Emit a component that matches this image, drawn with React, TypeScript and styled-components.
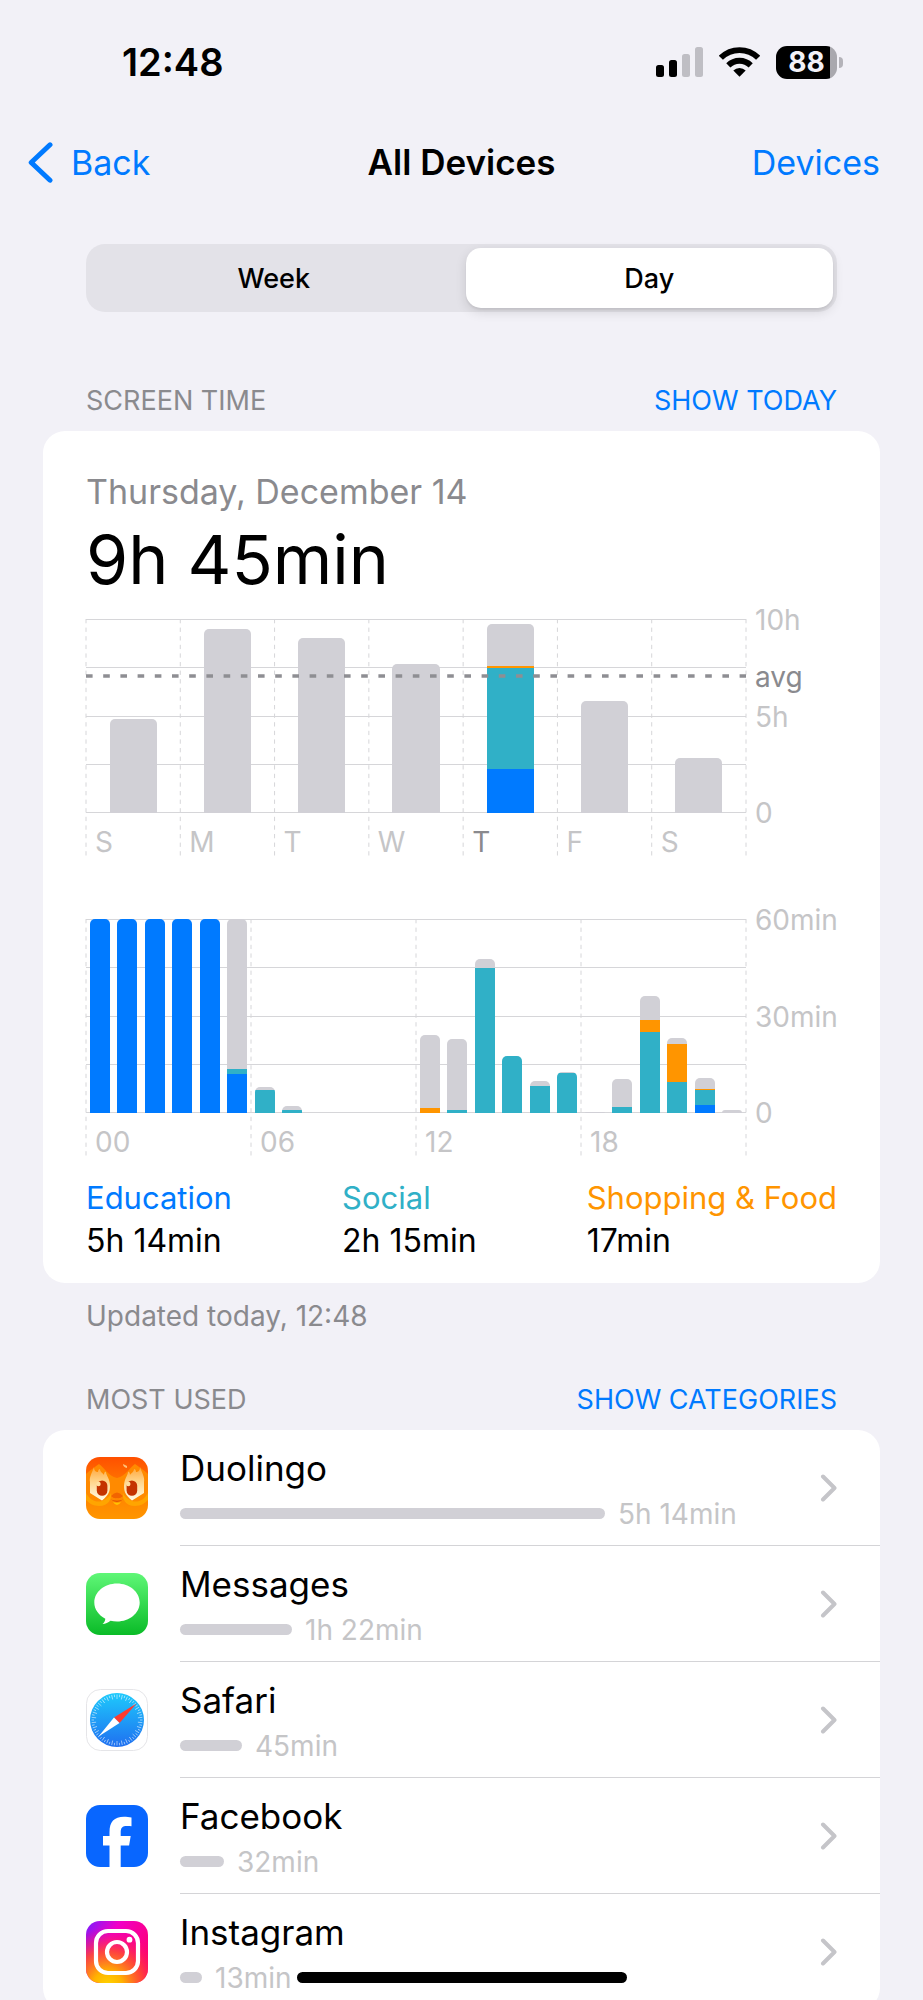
import React from "react";
import styled, { createGlobalStyle } from "styled-components";

const color = {
  page: "#f2f1f7",
  card: "#ffffff",
  blue: "#007aff",
  teal: "#30b0c7",
  orange: "#ff9500",
  gray: "#d1d0d6",
  label: "#8a8a8e",
  faint: "#c5c5c7",
  line: "#d6d6d9",
};

const GlobalStyle = createGlobalStyle`
  *, *::before, *::after { box-sizing: border-box; }
  body {
    margin: 0;
    background: ${color.page};
    color: #000;
    font-family: Inter, "Liberation Sans", sans-serif;
    font-size: 34px;
  }
  h1, h2, p, ul, dl, dt, dd { margin: 0; padding: 0; font: inherit; }
  button { border: 0; padding: 0; background: none; color: inherit; font: inherit; cursor: pointer; }
  a { color: inherit; text-decoration: none; }
  svg { display: block; }
`;

const Screen = styled.div`
  height: 100vh;
  overflow-y: auto;
  scrollbar-width: none;
`;

/* ---------- status bar and navigation ---------- */

const StatusBar = styled.header`
  display: flex;
  align-items: center;
  justify-content: space-between;
  height: 124px;
  padding: 0 80px 0 122px;
`;

const Clock = styled.time`
  font-size: 38px;
  font-weight: 600;
`;

const StatusIcons = styled.div`
  display: flex;
  align-items: center;
  gap: 16px;
`;

const Battery = styled.div`
  display: flex;
  align-items: center;
  gap: 2px;
`;

const BatteryBody = styled.div`
  display: flex;
  justify-content: center;
  align-items: center;
  width: 61px;
  height: 33px;
  border-radius: 11px;
  background: linear-gradient(to right, #000 54px, #a9a8ae 54px);
  color: ${color.page};
  font-size: 28px;
  font-weight: 700;
`;

const BatteryTip = styled.div`
  width: 4px;
  height: 11px;
  border-radius: 0 4px 4px 0;
  background: #b4b3b9;
`;

const NavBar = styled.nav`
  display: grid;
  grid-template-columns: 1fr auto 1fr;
  align-items: center;
  height: 76px;
  padding: 0 28px;
`;

const NavTitle = styled.h1`
  font-size: 35px;
  font-weight: 600;
`;

const NavButton = styled.button<{ $end?: boolean }>`
  display: flex;
  align-items: center;
  gap: 18px;
  justify-self: ${(p) => (p.$end ? "end" : "start")};
  padding-right: ${(p) => (p.$end ? 15 : 0)}px;
  color: ${color.blue};
`;

const Main = styled.main`
  padding: 44px 43px 0;
`;

const Segmented = styled.div`
  display: grid;
  grid-template-columns: 1fr 1fr;
  gap: 8px;
  height: 68px;
  margin: 0 43px;
  padding: 4px;
  border-radius: 19px;
  background: #e3e2e8;
`;

const Segment = styled.button<{ $active?: boolean }>`
  border-radius: 15px;
  font-size: 27px;
  font-weight: 500;
  background: ${(p) => (p.$active ? "#fff" : "transparent")};
  box-shadow: ${(p) => (p.$active ? "0 4px 12px rgba(0,0,0,.12), 0 2px 2px rgba(0,0,0,.06)" : "none")};
`;

/* ---------- sections ---------- */

const SectionHead = styled.div<{ $top: number }>`
  display: flex;
  justify-content: space-between;
  align-items: center;
  margin-top: ${(p) => p.$top}px;
  padding: 0 43px 13px;
  font-size: 27px;
  line-height: 34px;
`;

const SectionTitle = styled.h2`
  color: ${color.label};
`;

const SectionLink = styled.button`
  color: ${color.blue};
`;

const Card = styled.section`
  border-radius: 22px;
  background: ${color.card};
  overflow: hidden;
`;

const Summary = styled(Card)`
  padding: 40px 43px 21px;
`;

const DateText = styled.p`
  color: ${color.label};
  line-height: 42px;
`;

const Total = styled.p`
  font-size: 68px;
  line-height: 92px;
`;

const Note = styled.p`
  padding: 14px 43px 0;
  color: ${color.label};
  font-size: 28px;
  line-height: 38px;
`;

/* ---------- charts ---------- */

const PLOT = 193;
const FULL = 237;

const Chart = styled.figure<{ $top: number }>`
  display: grid;
  grid-template-columns: 1fr 91px;
  margin: ${(p) => p.$top}px 0 0;
`;

const Plot = styled.div`
  display: grid;
  height: ${FULL}px;

  > * {
    grid-area: 1 / 1;
  }
`;

const Bars = styled.div<{ $count: number }>`
  display: grid;
  grid-template-columns: repeat(${(p) => p.$count}, 1fr);
  align-items: end;
  justify-items: center;
  height: ${PLOT + 1}px;
`;

const Bar = styled.div<{ $wide?: boolean }>`
  display: flex;
  flex-direction: column-reverse;
  width: ${(p) => (p.$wide ? 50 : 73)}%;
  border-radius: 5px 5px 0 0;
  overflow: hidden;
`;

const Part = styled.div<{ $color: string }>`
  background: ${(p) => p.$color};
`;

const TickRow = styled.div<{ $count: number }>`
  display: grid;
  grid-template-columns: repeat(${(p) => p.$count}, 1fr);
  align-self: end;
  color: ${color.faint};
  font-size: 28px;
  line-height: 27px;
`;

const Tick = styled.span<{ $active?: boolean }>`
  padding-left: 9px;
  color: ${(p) => (p.$active ? color.label : "inherit")};
`;

const Scale = styled.div`
  display: flex;
  flex-direction: column;
  margin-top: -13px;
  padding-left: 9px;
  color: ${color.faint};
  font-size: 28px;
  line-height: 28px;
`;

const ScaleLabel = styled.span<{ $gap: number; $strong?: boolean }>`
  height: 28px;
  margin-top: ${(p) => p.$gap}px;
  color: ${(p) => (p.$strong ? color.label : "inherit")};
`;

function GridLines({ columns }: { columns: number }) {
  return (
    <svg width="100%" height={FULL} overflow="visible" aria-hidden="true">
      {[0, 48, 97, 145, 193].map((y) => (
        <line key={y} x1="0" x2="100%" y1={y + 0.5} y2={y + 0.5} stroke={color.line} />
      ))}
      {Array.from({ length: columns + 1 }, (_, i) => (
        <line
          key={i}
          x1={`${(i * 100) / columns}%`}
          x2={`${(i * 100) / columns}%`}
          y1="0"
          y2={FULL}
          stroke={color.line}
          strokeDasharray="4.3 4.3"
        />
      ))}
    </svg>
  );
}

type Stack = { edu?: number; social?: number; shop?: number; other?: number };

function StackedBars({ data, wide }: { data: Stack[]; wide?: boolean }) {
  return (
    <Bars $count={data.length}>
      {data.map((d, i) => (
        <Bar key={i} $wide={wide}>
          <Part $color={color.blue} style={{ height: d.edu ?? 0 }} />
          <Part $color={color.teal} style={{ height: d.social ?? 0 }} />
          <Part $color={color.orange} style={{ height: d.shop ?? 0 }} />
          <Part $color={color.gray} style={{ height: d.other ?? 0 }} />
        </Bar>
      ))}
    </Bars>
  );
}

const week: Stack[] = [
  { other: 94 },
  { other: 184 },
  { other: 175 },
  { other: 149 },
  { edu: 44, social: 101, shop: 2, other: 42 },
  { other: 112 },
  { other: 55 },
];

const hours: Stack[] = [
  { edu: 194 },
  { edu: 194 },
  { edu: 194 },
  { edu: 194 },
  { edu: 194 },
  { edu: 39, social: 5, other: 150 },
  { social: 23, other: 3 },
  { social: 3, other: 4 },
  {},
  {},
  {},
  {},
  { shop: 5, other: 73 },
  { social: 3, other: 71 },
  { social: 145, other: 9 },
  { social: 57 },
  { social: 27, other: 5 },
  { social: 40, other: 1 },
  { other: 1 },
  { social: 6, other: 28 },
  { social: 81, shop: 12, other: 24 },
  { social: 31, shop: 38, other: 6 },
  { edu: 8, social: 15, shop: 1, other: 11 },
  { other: 3 },
];

const days = ["S", "M", "T", "W", "T", "F", "S"];

function WeekChart() {
  return (
    <Chart $top={14} aria-label="Screen time per day">
      <Plot>
        <GridLines columns={7} />
        <StackedBars data={week} wide />
        <svg width="100%" height={PLOT} aria-hidden="true">
          <line x1="0" x2="100%" y1="57" y2="57" stroke="#8e8e93" strokeWidth="3.4" strokeDasharray="6.6 10.6" />
        </svg>
        <TickRow $count={7}>
          {days.map((d, i) => (
            <Tick key={i} $active={i === 4}>
              {d}
            </Tick>
          ))}
        </TickRow>
      </Plot>
      <Scale>
        <ScaleLabel $gap={0}>10h</ScaleLabel>
        <ScaleLabel $gap={29} $strong>
          avg
        </ScaleLabel>
        <ScaleLabel $gap={12}>5h</ScaleLabel>
        <ScaleLabel $gap={68}>0</ScaleLabel>
      </Scale>
    </Chart>
  );
}

function HourChart() {
  return (
    <Chart $top={63} aria-label="Screen time per hour">
      <Plot>
        <GridLines columns={4} />
        <StackedBars data={hours} />
        <TickRow $count={4}>
          {["00", "06", "12", "18"].map((h) => (
            <Tick key={h}>{h}</Tick>
          ))}
        </TickRow>
      </Plot>
      <Scale>
        <ScaleLabel $gap={0}>60min</ScaleLabel>
        <ScaleLabel $gap={69}>30min</ScaleLabel>
        <ScaleLabel $gap={68}>0</ScaleLabel>
      </Scale>
    </Chart>
  );
}

const Legend = styled.dl`
  display: flex;
  justify-content: space-between;
  margin-top: 20px;
  font-size: 31px;
  line-height: 43px;
`;

const LegendName = styled.dt<{ $color: string }>`
  color: ${(p) => p.$color};
`;

const LegendTime = styled.dd`
  font-size: 32px;
`;

/* ---------- app list ---------- */

const AppList = styled.ul`
  list-style: none;
`;

const AppRow = styled.li`
  padding-left: 43px;
`;

const AppLink = styled.a`
  display: flex;
  align-items: center;
  gap: 32px;
`;

const AppBody = styled.div`
  display: flex;
  flex: 1;
  align-items: center;
  justify-content: space-between;
  height: 116px;
  padding-right: 43px;
  border-bottom: 1px solid #d4d4d7;
`;

const AppText = styled.div`
  flex: 1;
  padding-top: 4px;
`;

const AppName = styled.div`
  font-size: 35px;
  line-height: 48px;
`;

const Usage = styled.div`
  display: flex;
  align-items: center;
  gap: 13px;
  color: ${color.faint};
  font-size: 28px;
  line-height: 44px;
`;

const UsageBar = styled.div`
  height: 11px;
  border-radius: 6px;
  background: ${color.gray};
`;

const HomeIndicator = styled.div`
  position: fixed;
  bottom: 17px;
  left: 50%;
  width: 330px;
  height: 11px;
  border-radius: 6px;
  background: #000;
  transform: translateX(-50%);
`;

/* ---------- drawings ---------- */

const SignalIcon = () => (
  <svg width="47" height="30" viewBox="0 0 47 30" aria-hidden="true">
    <rect x="0" y="18" width="8" height="12" rx="2.5" />
    <rect x="13" y="13" width="8" height="17" rx="2.5" />
    <rect x="26" y="7" width="8" height="23" rx="2.5" fill="#bfbec4" />
    <rect x="39" y="0" width="8" height="30" rx="2.5" fill="#bfbec4" />
  </svg>
);

const WifiIcon = () => (
  <svg width="41" height="30" viewBox="0 0 41 30" fill="none" stroke="#000" strokeWidth="5.8" aria-hidden="true">
    <path d="M1.9 10.8a26.4 26.4 0 0 1 37.2 0" />
    <path d="M9.3 18.4a15.8 15.8 0 0 1 22.4 0" />
    <path d="M20.5 29.8l-6.2-6.300a8.700 8.700 0 0 1 12.400 0z" fill="#000" stroke="none" />
  </svg>
);

const BackIcon = () => (
  <svg width="25" height="41" viewBox="0 0 25 41" fill="none" stroke="currentColor" strokeWidth="5" strokeLinecap="round" strokeLinejoin="round" aria-hidden="true">
    <path d="M22 2.8 3.2 20.5 22 38.2" />
  </svg>
);

const ChevronIcon = () => (
  <svg width="17" height="28" viewBox="0 0 17 28" fill="none" stroke="#c5c5c9" strokeWidth="4" strokeLinecap="round" strokeLinejoin="round" aria-hidden="true">
    <path d="M3 2.5 14.5 14 3 25.5" />
  </svg>
);

const DuolingoIcon = () => (
  <svg width="62" height="62" viewBox="0 0 62 62" aria-hidden="true">
    <defs>
      <linearGradient id="duo-bg" x2="0" y2="1">
        <stop offset="0" stopColor="#ff4f00" />
        <stop offset=".5" stopColor="#ff7d00" />
        <stop offset="1" stopColor="#ff9600" />
      </linearGradient>
      <linearGradient id="duo-eye" x2="0" y2="1">
        <stop offset="0" stopColor="#ffa63c" />
        <stop offset=".45" stopColor="#ffd68c" />
        <stop offset="1" stopColor="#fffbe8" />
      </linearGradient>
      <clipPath id="duo-clip">
        <rect width="62" height="62" rx="14" />
      </clipPath>
      <g id="duo-half">
        <path d="M0 17C4 13 9 10 13 7C18 10 22 19 31 21V42C27 42 24 49 13 49C7 49 3 46 0 43Z" fill="#ff8a00" />
        <path d="M0 36C4 43 10 46 16 44C21 42 24 39 25 36C26 41 23 49 13 49C7 49 3 46 0 43Z" fill="#ffa500" />
        <path d="M4 25C3 20 6 16 8 10C8 14 10 15 12 15C12 13 13 12 14 12C14 15 17 16 18 18C18 16 19 14 20 15C20 18 24 22 24 29C24 34 23 38 16 43.500L4 36Z" fill="url(#duo-eye)" />
      </g>
    </defs>
    <g clipPath="url(#duo-clip)">
      <rect width="62" height="62" fill="url(#duo-bg)" />
      <use href="#duo-half" />
      <use href="#duo-half" transform="matrix(-1 0 0 1 62 0)" />
      <rect x="10.800" y="23.500" width="10.600" height="15.300" rx="5.300" fill="#c43300" />
      <rect x="40.600" y="23.500" width="10.600" height="15.300" rx="5.300" fill="#c43300" />
      <circle cx="12.500" cy="27" r="2.200" fill="#ffe0a0" />
      <circle cx="42.300" cy="27" r="2.200" fill="#ffe0a0" />
      <path d="M37 7l4 2v2q-4-1-4-4z" fill="#ffc27a" />
      <path d="M25 39Q31 32 37 39Q34 42 31 41Q28 42 25 39Z" fill="#f26400" />
      <path d="M25 42.500Q31 45 37 42.500Q31 47 25 42.500Z" fill="#d94700" />
      <path d="M27 45Q31 46.500 35 45Q33 48 31 48Q29 48 27 45Z" fill="#ffc400" />
    </g>
  </svg>
);

const MessagesIcon = () => (
  <svg width="62" height="62" viewBox="0 0 62 62" aria-hidden="true">
    <defs>
      <linearGradient id="msg-bg" x2="0" y2="1">
        <stop offset="0" stopColor="#5ff777" />
        <stop offset="1" stopColor="#0abb27" />
      </linearGradient>
    </defs>
    <rect width="62" height="62" rx="14" fill="url(#msg-bg)" />
    <path d="M31 10.500c12.600 0 22.700 8.500 22.700 19S43.600 48.500 31 48.500c-2.300 0-4.500-.3-6.500-.8-2.300 1.900-5 3.200-8 3.400 1.600-1.500 2.700-3.300 2.800-5.400C12.700 42.300 8.300 36.300 8.300 29.500c0-10.500 10.100-19 22.700-19z" fill="#fff" />
  </svg>
);

const SafariIcon = () => (
  <svg width="62" height="62" viewBox="0 0 62 62" aria-hidden="true">
    <defs>
      <linearGradient id="saf-bg" x2="0" y2="1">
        <stop offset="0" stopColor="#1ecafc" />
        <stop offset="1" stopColor="#1f6ff0" />
      </linearGradient>
    </defs>
    <rect x=".5" y=".5" width="61" height="61" rx="14" fill="#fff" stroke="#e5e5e8" />
    <circle cx="31" cy="31" r="27" fill="url(#saf-bg)" />
    {Array.from({ length: 60 }, (_, i) => (
      <line
        key={i}
        x1="31"
        x2="31"
        y1="5.500"
        y2={i % 2 ? 8 : 10}
        stroke="#fff"
        strokeWidth=".6"
        strokeOpacity=".85"
        transform={`rotate(${i * 6} 31 31)`}
      />
    ))}
    <path d="M50.500 14.500 28 28.500l5.500 5.500z" fill="#ff3b30" />
    <path d="M12.500 47.500 28 28.500l5.500 5.500z" fill="#fff" />
  </svg>
);

const FacebookIcon = () => (
  <svg width="62" height="62" viewBox="0 0 62 62" aria-hidden="true">
    <rect width="62" height="62" rx="14" fill="#0866ff" />
    <path d="M23.500 62V40.500H17V31h6.500v-4c0-10.300 4.600-15.300 14.500-15.300 2.300 0 5.500.3 7.500.7v8.800c-1-.1-2.500-.2-4.500-.2-4.700 0-6.300 1.800-6.300 6.300V31h10l-1.600 9.500h-8.400V62z" fill="#fff" />
  </svg>
);

const InstagramIcon = () => (
  <svg width="62" height="62" viewBox="0 0 62 62" aria-hidden="true">
    <defs>
      <linearGradient id="ig-base" x1="0" y1="0" x2="1" y2=".6">
        <stop offset="0" stopColor="#7a1cff" />
        <stop offset=".4" stopColor="#f000c8" />
        <stop offset="1" stopColor="#ff0070" />
      </linearGradient>
      <radialGradient id="ig-glow" cx=".35" cy="1.05" r=".95">
        <stop offset="0" stopColor="#ffd600" />
        <stop offset=".25" stopColor="#ffb300" />
        <stop offset=".6" stopColor="#ff4d2e" stopOpacity=".85" />
        <stop offset="1" stopColor="#ff0070" stopOpacity="0" />
      </radialGradient>
    </defs>
    <rect width="62" height="62" rx="14" fill="url(#ig-base)" />
    <rect width="62" height="62" rx="14" fill="url(#ig-glow)" />
    <g fill="none" stroke="#fff" strokeWidth="4.200">
      <rect x="10" y="10" width="42" height="42" rx="12" />
      <circle cx="31" cy="31" r="10" />
    </g>
    <circle cx="43.500" cy="18.700" r="2.900" fill="#fff" />
  </svg>
);

const apps = [
  { name: "Duolingo", time: "5h 14min", bar: 425, icon: <DuolingoIcon /> },
  { name: "Messages", time: "1h 22min", bar: 112, icon: <MessagesIcon /> },
  { name: "Safari", time: "45min", bar: 62, icon: <SafariIcon /> },
  { name: "Facebook", time: "32min", bar: 44, icon: <FacebookIcon /> },
  { name: "Instagram", time: "13min", bar: 22, icon: <InstagramIcon /> },
];

export default function App() {
  return (
    <Screen>
      <GlobalStyle />
      <StatusBar>
        <Clock>12:48</Clock>
        <StatusIcons>
          <SignalIcon />
          <WifiIcon />
          <Battery>
            <BatteryBody>88</BatteryBody>
            <BatteryTip />
          </Battery>
        </StatusIcons>
      </StatusBar>
      <NavBar>
        <NavButton type="button">
          <BackIcon />
          Back
        </NavButton>
        <NavTitle>All Devices</NavTitle>
        <NavButton type="button" $end>
          Devices
        </NavButton>
      </NavBar>
      <Main>
        <Segmented>
          <Segment type="button" aria-pressed={false}>
            Week
          </Segment>
          <Segment type="button" aria-pressed $active>
            Day
          </Segment>
        </Segmented>

        <SectionHead $top={72}>
          <SectionTitle>SCREEN TIME</SectionTitle>
          <SectionLink type="button">SHOW TODAY</SectionLink>
        </SectionHead>
        <Summary>
          <DateText>Thursday, December 14</DateText>
          <Total>9h 45min</Total>
          <WeekChart />
          <HourChart />
          <Legend>
            <div>
              <LegendName $color={color.blue}>Education</LegendName>
              <LegendTime>5h 14min</LegendTime>
            </div>
            <div>
              <LegendName $color={color.teal}>Social</LegendName>
              <LegendTime>2h 15min</LegendTime>
            </div>
            <div>
              <LegendName $color={color.orange}>Shopping &amp; Food</LegendName>
              <LegendTime>17min</LegendTime>
            </div>
          </Legend>
        </Summary>
        <Note>Updated today, 12:48</Note>

        <SectionHead $top={48}>
          <SectionTitle>MOST USED</SectionTitle>
          <SectionLink type="button">SHOW CATEGORIES</SectionLink>
        </SectionHead>
        <Card>
          <AppList>
            {apps.map((app) => (
              <AppRow key={app.name}>
                <AppLink href="#">
                  {app.icon}
                  <AppBody>
                    <AppText>
                      <AppName>{app.name}</AppName>
                      <Usage>
                        <UsageBar style={{ width: app.bar }} />
                        {app.time}
                      </Usage>
                    </AppText>
                    <ChevronIcon />
                  </AppBody>
                </AppLink>
              </AppRow>
            ))}
          </AppList>
        </Card>
      </Main>
      <HomeIndicator />
    </Screen>
  );
}
